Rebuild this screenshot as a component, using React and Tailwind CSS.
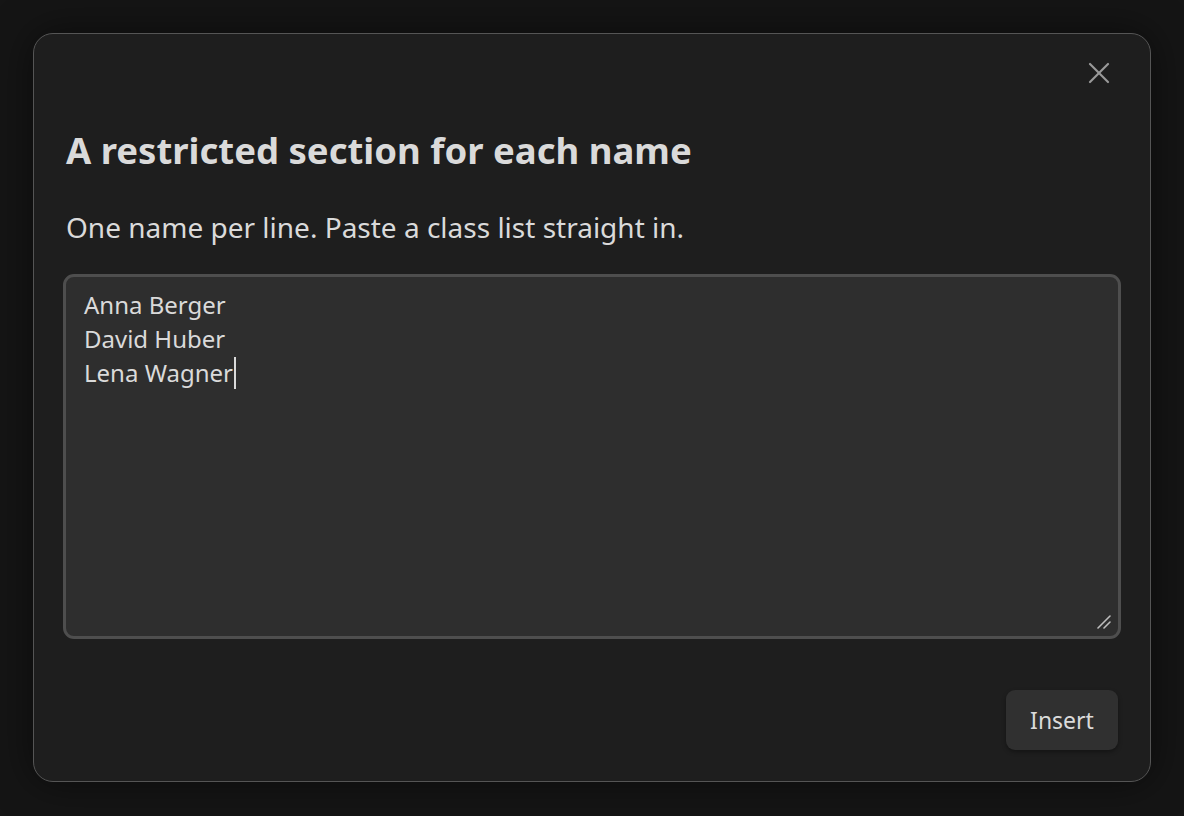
import React from "react";

export default function App() {
  return (
    <div
      className="w-[1184px] h-[816px] bg-[#151515] flex items-start justify-start p-[33px]"
      style={{ fontFamily: '"Noto Sans", "Open Sans", sans-serif' }}
    >
      <div className="relative w-[1118px] h-[749px] bg-[#1e1e1e] border-[1.5px] border-[#555555] rounded-[20px] shadow-[0_0_40px_rgba(0,0,0,0.5)] px-[32px] pt-[32px] pb-[31px] flex flex-col">
        <button className="absolute right-[40px] top-[28px] w-[22px] h-[22px] flex items-center justify-center text-[#9a9a9a]">
          <svg width="22" height="22" viewBox="0 0 22 22" fill="none" stroke="currentColor" strokeWidth="2.2" strokeLinecap="round">
            <path d="M2 2 L20 20" />
            <path d="M20 2 L2 20" />
          </svg>
        </button>
        <h1 className="mt-[62px] text-[36.5px] leading-[44px] font-bold text-[#dadada]">
          A restricted section for each name
        </h1>
        <p className="mt-[37px] text-[28px] leading-[36px] text-[#dadada]">
          One name per line. Paste a class list straight in.
        </p>
        <div className="mt-[29px] -mx-[3px] h-[365px] rounded-[11px] border-[3px] border-[#4e4e4e] bg-[#2e2e2e] relative px-[18px] pt-[11px]">
          <div className="text-[24px] leading-[34px] text-[#dadada]">
            <div>Anna Berger</div>
            <div>David Huber</div>
            <div className="flex items-center">
              Lena Wagner
              <span className="inline-block w-[1.5px] h-[32px] bg-[#dadada] ml-[1px]" />
            </div>
          </div>
          <svg className="absolute right-[7px] bottom-[7px]" width="14" height="14" viewBox="0 0 14 14" stroke="#bdbdbd" strokeWidth="1.6" strokeLinecap="round">
            <path d="M13 1 L1 13" />
            <path d="M13 7 L7 13" />
          </svg>
        </div>
        <div className="mt-auto flex justify-end">
          <button className="w-[112px] h-[60px] rounded-[9px] bg-[#303030] text-[23px] text-[#dadada] shadow-[0_2px_4px_rgba(0,0,0,0.35)]">
            Insert
          </button>
        </div>
      </div>
    </div>
  );
}
